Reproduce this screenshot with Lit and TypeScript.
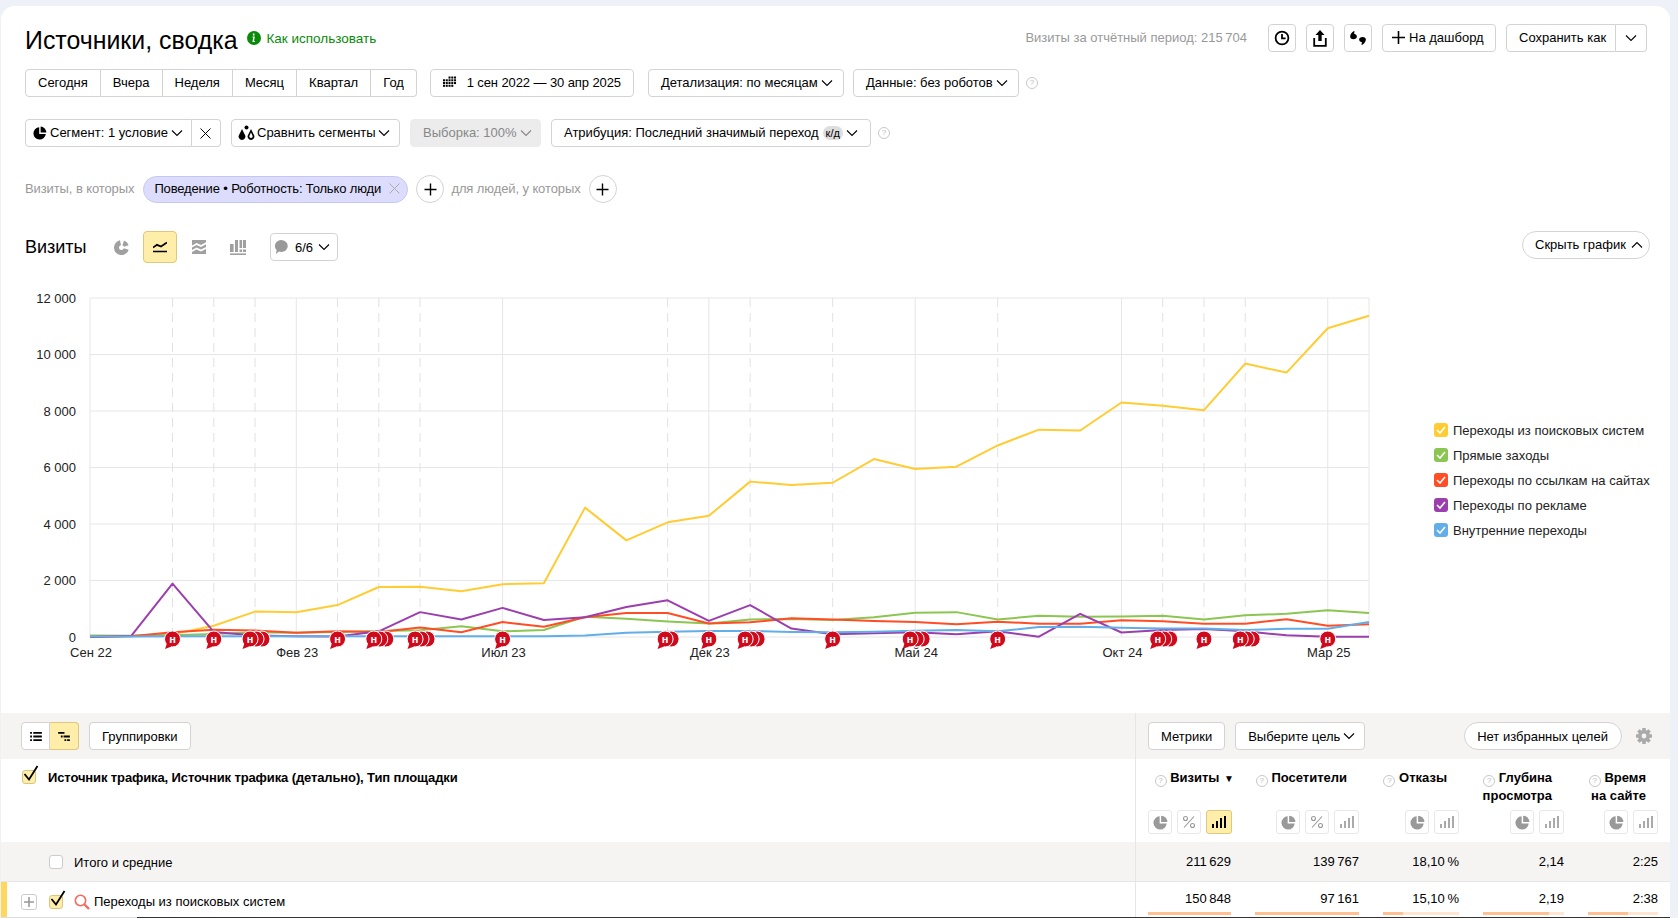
import { LitElement, html, css, svg } from "lit";
import { customElement } from "lit/decorators.js";

const chev = html`<svg class="chev" width="12" height="8" viewBox="0 0 12 8"><path d="M1 1.5 6 6.5 11 1.5" fill="none" stroke="currentColor" stroke-width="1.1"/></svg>`;
const chevUp = html`<svg class="chev" width="12" height="8" viewBox="0 0 12 8"><path d="M1 6.5 6 1.5 11 6.5" fill="none" stroke="currentColor" stroke-width="1.1"/></svg>`;
const pie = (c: string, s = 14) => html`<svg width=${s} height=${s} viewBox="0 0 14 14"><path d="M6.2 1.2A6.2 6.2 0 1 0 12.8 8H6.2Z" fill=${c}/><path d="M7.6 0.6A6 6 0 0 1 13.4 6.5H7.6Z" fill=${c}/></svg>`;
const percent = html`<svg width="14" height="14" viewBox="0 0 14 14" fill="none" stroke="#999" stroke-width="1.1"><circle cx="3.5" cy="3.5" r="2"/><circle cx="10.5" cy="10.5" r="2"/><path d="M12 1.5 2 12.5"/></svg>`;
const bars = (c: string) => html`<svg width="14" height="12" viewBox="0 0 14 12" fill=${c}><rect x="0" y="8" width="2" height="4"/><rect x="4" y="5" width="2" height="7"/><rect x="8" y="2" width="2" height="10"/><rect x="12" y="0" width="2" height="12"/></svg>`;
const plus = html`<svg width="13" height="13" viewBox="0 0 13 13"><path d="M6.5 0.5v12M0.5 6.5h12" stroke="#000" stroke-width="1.4"/></svg>`;
const cross = (c: string) => html`<svg width="11" height="11" viewBox="0 0 11 11"><path d="M0.5 0.5l10 10M10.5 0.5l-10 10" stroke=${c} stroke-width="1"/></svg>`;
const help = html`<span class="help">?</span>`;
const checkmark = html`<svg class="tick" width="16" height="17" viewBox="0 0 16 17"><path d="M1.5 9 6 14.5 14.5 1" fill="none" stroke="#000" stroke-width="1.8"/></svg>`;

const XS = (i: number) => 90 + (1279 / 31) * i;
const YS = (v: number) => 637 - (v / 2000) * 56.5;

const series: [string, number[]][] = [
  ["#ffcc33", [20, 40, 100, 400, 900, 880, 1130, 1770, 1780, 1620, 1870, 1900, 4580, 3420, 4060, 4290, 5500, 5380, 5460, 6300, 5950, 6030, 6780, 7340, 7310, 8300, 8190, 8030, 9680, 9360, 10930, 11370]],
  ["#8bc652", [50, 40, 60, 110, 170, 150, 180, 210, 240, 380, 200, 250, 720, 650, 550, 480, 620, 640, 600, 700, 860, 880, 620, 750, 720, 730, 750, 620, 770, 820, 950, 850]],
  ["#ff4d26", [0, 30, 170, 260, 230, 150, 200, 180, 340, 170, 530, 360, 700, 850, 850, 480, 520, 660, 620, 570, 530, 450, 540, 470, 470, 590, 560, 470, 470, 630, 400, 450]],
  ["#9c3fae", [0, 40, 1890, 180, 50, 30, 20, 200, 880, 620, 1030, 600, 700, 1060, 1300, 570, 1130, 300, 100, 130, 170, 100, 200, 10, 820, 160, 250, 280, 200, 60, 10, 10]],
  ["#62aee8", [20, 20, 25, 30, 30, 30, 30, 30, 30, 30, 30, 30, 50, 150, 190, 210, 210, 180, 170, 190, 220, 250, 200, 350, 360, 330, 300, 300, 250, 290, 290, 530]],
];
const dashed = [2, 3, 4, 6, 7, 8, 14, 16, 18, 22, 26, 27, 28];
const solid = [0, 5, 10, 15, 20, 25, 30];
const xLabels = ["Сен 22", "Фев 23", "Июл 23", "Дек 23", "Май 24", "Окт 24", "Мар 25"];
const stacks: [number, number][] = [[2, 1], [3, 1], [4, 3], [6, 1], [7, 3], [8, 3], [10, 1], [14, 2], [15, 1], [16, 3], [18, 1], [20, 3], [22, 1], [26, 3], [27, 1], [28, 3], [30, 1]];

const marker = (x: number, main: boolean) => svg`<g transform="translate(${x},639)">
  <circle r="8" fill="#cf0a1d" stroke="#fff" stroke-width="1"/>
  ${main ? svg`<path d="M-5.5 4-7.5 10-1 7.4Z" fill="#cf0a1d"/><text class="mk" y="3.5">н</text>` : ""}
</g>`;

const legend: [string, string][] = [
  ["#ffcc33", "Переходы из поисковых систем"],
  ["#8bc652", "Прямые заходы"],
  ["#ff4d26", "Переходы по ссылкам на сайтах"],
  ["#9c3fae", "Переходы по рекламе"],
  ["#62aee8", "Внутренние переходы"],
];

interface Metric { t: any; cls?: string; btns: ("pie" | "pct" | "bar" | "barOn")[]; }
const metrics: Metric[] = [
  { t: html`${help} Визиты <span class="sort">▼</span>`, cls: "sorted", btns: ["pie", "pct", "barOn"] },
  { t: html`${help} Посетители`, btns: ["pie", "pct", "bar"] },
  { t: html`${help} Отказы`, btns: ["pie", "bar"] },
  { t: html`${help} Глубина<br />просмотра`, btns: ["pie", "bar"] },
  { t: html`${help} Время<br />на сайте`, btns: ["pie", "bar"] },
];
const totals = ["211\u2009629", "139\u2009767", "18,10\u2009%", "2,14", "2:25"];
const row1 = ["150\u2009848", "97\u2009161", "15,10\u2009%", "2,19", "2:38"];
const fills = [100, 100, 26, 82, 57];

@customElement("app-root")
export class AppRoot extends LitElement {
  static styles = css`
    :host { display: block; width: 1678px; height: 918px; overflow: hidden; background: #eef1f7; font: 13px "Liberation Sans", Arial, sans-serif; color: #000; }
    * { box-sizing: border-box; }
    .card { margin: 6px 8px 0 1px; height: 912px; background: #fff; border-radius: 14px 14px 0 0; display: flex; flex-direction: column; overflow: hidden; }
    .row { display: flex; align-items: center; padding-left: 24px; height: 28px; flex: none; }
    .r0 { margin-top: 18px; }
    .r1 { margin-top: 17px; }
    .r2 { margin-top: 22px; }
    .r3 { margin-top: 28px; }
    .r4 { margin-top: 28px; height: 32px; }
    h1 { font-size: 24.9px; font-weight: 400; margin: 0; line-height: 28px; padding-top: 3px; }
    .how { display: flex; align-items: center; gap: 5px; margin-left: 10px; color: #0a8a0a; font-size: 13.5px; }
    .spacer { flex: 1; }
    .muted { color: #999; padding-bottom: 2px; }
    .btn { height: 28px; border: 1px solid #d3d3d3; border-radius: 4px; background: #fff; display: inline-flex; align-items: center; padding: 0 12px 1px; gap: 3px; white-space: nowrap; flex: none; }
    .chev { flex: none; }
    .group { display: flex; flex: none; }
    .group .btn { border-radius: 0; border-left-width: 0; }
    .group .btn:first-child { border-left-width: 1px; border-radius: 4px 0 0 4px; }
    .group .btn:last-child { border-radius: 0 4px 4px 0; }
    .ico { width: 28px; padding: 0; justify-content: center; }
    .help { width: 12px; height: 12px; border: 1px solid #c8c8c8; border-radius: 50%; color: #bbb; font-size: 8px; line-height: 10px; font-weight: 400; text-align: center; display: inline-block; vertical-align: -1px; }
    .off { background: #ececec; border-color: #ececec; color: #888; }
    .kd { background: #ddd; border-radius: 8px; font-size: 11px; padding: 1px 3px; margin-left: 1px; }
    .chip { height: 27px; width: 265px; padding: 0 7px 1px 10px; display: inline-flex; align-items: center; justify-content: space-between; background: #dcddfc; border: 1px solid #c6c7f0; border-radius: 14px; white-space: nowrap; letter-spacing: -0.15px; flex: none; }
    .round { width: 28px; height: 28px; border: 1px solid #d3d3d3; border-radius: 50%; display: inline-flex; align-items: center; justify-content: center; flex: none; }
    .tight { letter-spacing: -0.1px; }
    .vis { font-size: 18px; width: 74px; }
    .slot { width: 36px; height: 32px; display: inline-flex; align-items: center; justify-content: center; flex: none; }
    .slot.on { width: 34px; background: #ffeeaa; border: 1px solid #dcc87e; border-radius: 4px; }
    .pill { border-radius: 14px; }
    .chartwrap { height: 450px; display: flex; flex: none; }
    .chartwrap svg.chart { display: block; flex: none; }
    .ax { font: 13px "Liberation Sans", Arial, sans-serif; fill: #222; }
    .mk { font: bold 11px "Liberation Sans", Arial, sans-serif; fill: #fff; text-anchor: middle; }
    .legend { display: flex; flex-direction: column; gap: 7px; padding-top: 158px; margin-left: 1px; }
    .li { display: flex; align-items: center; height: 18px; gap: 5px; white-space: nowrap; color: #222; }
    .lbox { width: 14px; height: 14px; border-radius: 3px; display: inline-flex; align-items: center; justify-content: center; flex: none; }
    .tbar { display: grid; grid-template-columns: 1134px 1fr; height: 46px; background: #f5f4f2; flex: none; }
    .tbar .btn { padding-bottom: 0; }
    .tl { display: flex; align-items: center; padding-left: 20px; gap: 10px; }
    .tr { display: flex; align-items: center; padding-left: 12px; gap: 10px; border-left: 1px solid #e6e6e6; }
    .seg { width: 29px; padding: 0; justify-content: center; }
    .seg.on { background: #ffeeaa; border-color: #dcc87e; }
    .grid { display: grid; grid-template-columns: 1134px 108px 128px 100px 105px 94px; flex: none; }
    .hd { height: 83px; }
    .hl { padding: 11px 0 0 21px; display: flex; align-items: flex-start; gap: 12px; font-weight: 700; font-size: 13px; letter-spacing: -0.12px; line-height: 15px; }
    .check { width: 14px; height: 14px; border: 1px solid #d8c680; background: #ffeeaa; border-radius: 3px; position: relative; flex: none; display: inline-block; }
    .check.blank { background: #fff; border-color: #ccc; }
    .tick { position: absolute; left: 0; top: -6px; }
    .first { border-left: 1px solid #e6e6e6; }
    .hc { padding: 10px 24px 8px 0; display: flex; flex-direction: column; align-items: flex-end; }
    .hc.sorted { padding-right: 9px; }
    .ht { font-weight: 700; font-size: 13px; line-height: 17px; text-align: right; height: 34px; white-space: nowrap; }
    .sort { font-size: 10px; margin-left: 1px; }
    .mb { margin-top: auto; display: flex; gap: 5px; align-self: flex-end; margin-right: -12px; }
    .hc.sorted .mb { margin-right: 2px; }
    .m { width: 24px; height: 24px; border: 1px solid #e8e8e8; border-radius: 3px; display: inline-flex; align-items: center; justify-content: center; background: #fff; }
    .m.wide { width: 25px; }
    .m.on { width: 26px; background: #ffeeaa; border-color: #dcc87e; }
    .tot { height: 40px; background: #f5f4f2; border-bottom: 1px solid #e6e6e6; }
    .tot > div { display: flex; align-items: center; }
    .totl { padding-left: 48px; gap: 11px; }
    .totl span:last-child { padding-top: 1px; }
    .num { justify-content: flex-end; padding-right: 12px; }
    .dat { height: 35px; }
    .datl { display: flex; align-items: center; height: 35px; border-left: 6px solid #ffd75f; padding: 4px 0 0 14px; }
    .expand { width: 16px; height: 16px; border: 1px solid #ccc; border-radius: 3px; display: inline-flex; align-items: center; justify-content: center; margin-right: 12px; }
    .lens { margin: 0 4px 0 11px; flex: none; }
    .dc { padding: 9px 12px 0; text-align: right; height: 35px; display: flex; flex-direction: column; }
    .bar { height: 3px; background: #ffe6d2; margin-top: auto; margin-bottom: 2px; }
    .bar i { display: block; height: 3px; background: #ffc191; }
    .edge { display: flex; height: 1px; flex: none; background: #333; }
    .edge i { display: block; width: 136px; background: #ddd; }
  `;

  private metricBtn(k: string) {
    if (k === "pie") return html`<span class="m">${pie("#999", 15)}</span>`;
    if (k === "pct") return html`<span class="m">${percent}</span>`;
    if (k === "bar") return html`<span class="m wide">${bars("#aaa")}</span>`;
    return html`<span class="m on">${bars("#000")}</span>`;
  }

  render() {
    return html`<div class="card">
      <div class="row r0">
        <h1>Источники, сводка</h1>
        <span class="how">
          <svg width="14" height="14" viewBox="0 0 14 14"><circle cx="7" cy="7" r="7" fill="#0a8a0a"/><path d="M7.5 2.5v2h-1.6v-2ZM7.8 5.6 7 10h1v1H5.4l.8-4.4H5.5v-1Z" fill="#fff"/></svg>
          Как использовать
        </span>
        <span class="spacer"></span>
        <span class="muted">Визиты за отчётный период: 215\u2009704</span>
        <span class="btn ico" style="margin-left:21px">
          <svg width="16" height="16" viewBox="0 0 16 16" fill="none" stroke="#000" stroke-width="1.8"><circle cx="8" cy="8" r="6.4"/><path d="M8 4v4.4h3.6"/></svg>
        </span>
        <span class="btn ico" style="margin-left:10px">
          <svg width="14" height="17" viewBox="0 0 14 17"><path d="M7 0 11.5 5H8.7v6H5.3V5H2.5Z"/><path d="M1.2 8v7.8h11.6V8" fill="none" stroke="#000" stroke-width="1.8"/></svg>
        </span>
        <span class="btn ico" style="margin-left:10px">
          <svg width="18" height="16" viewBox="0 0 16 14"><path d="M4 1 5 1 4.5 3.2C6.3 3.5 7 4.5 7 5.8 7 7.2 5.8 8 4 8 2 8 1 7 1 5.6 1 3.8 2.5 2 4 1Z"/><path d="M12 13 11 13 11.5 10.8C9.7 10.5 9 9.5 9 8.2 9 6.8 10.2 6 12 6 14 6 15 7 15 8.4 15 10.2 13.5 12 12 13Z"/></svg>
        </span>
        <span class="btn" style="margin-left:10px;gap:4px;padding:0 9px 1px;width:114px">
          <svg width="13" height="13" viewBox="0 0 13 13"><path d="M6.5 0v13M0 6.5h13" stroke="#000" stroke-width="1.6"/></svg>На дашборд
        </span>
        <span class="group" style="margin:0 23px 0 10px">
          <span class="btn" style="width:110px">Сохранить как</span>
          <span class="btn" style="padding:0 9px">${chev}</span>
        </span>
      </div>

      <div class="row r1">
        <span class="group">
          ${["Сегодня", "Вчера", "Неделя", "Месяц", "Квартал", "Год"].map((t) => html`<span class="btn">${t}</span>`)}
        </span>
        <span class="btn" style="margin-left:13px;gap:10px;width:204px">
          <svg width="15" height="13" viewBox="0 0 15 13" fill="#000">
            ${[0, 3, 6, 9].map((y) => [0, 3, 6, 9, 12].map((x) => (y === 0 && x < 6) || (y === 9 && x > 9) ? "" : svg`<rect x=${x} y=${y} width="2.2" height="2.2"/>`))}
          </svg>
          <span class="tight">1 сен 2022 — 30 апр 2025</span>
        </span>
        <span class="btn" style="margin-left:14px;width:196px">Детализация: по месяцам ${chev}</span>
        <span class="btn" style="margin-left:9px;width:166px">Данные: без роботов ${chev}</span>
        <span style="margin-left:7px;display:flex">${help}</span>
      </div>

      <div class="row r2">
        <span class="group">
          <span class="btn" style="padding:0 6px 1px 7px;gap:3px;width:167px">${pie("#000")} Сегмент: 1 условие ${chev}</span>
          <span class="btn" style="padding:0 8px;width:29px">${cross("#000")}</span>
        </span>
        <span class="btn" style="margin-left:10px;padding:0 6px 1px 6px;gap:2px;width:169px">
          <svg width="17" height="15" viewBox="0 0 17 15"><path d="M4 4 7 10a3.4 3.4 0 1 1-6 0Z"/><path d="M13 4 16 10a3.4 3.4 0 1 1-6 0ZM13 7.5 11.6 10.6a1.6 1.6 0 1 0 2.8 0Z" fill-rule="evenodd"/><circle cx="8.5" cy="2.5" r="2"/></svg>
          Сравнить сегменты ${chev}
        </span>
        <span class="btn off" style="margin-left:10px;width:131px">Выборка: 100% ${chev}</span>
        <span class="btn" style="margin-left:10px;width:320px">Атрибуция: Последний значимый переход <span class="kd">к/д</span> ${chev}</span>
        <span style="margin-left:7px;display:flex">${help}</span>
      </div>

      <div class="row r3">
        <span class="muted tight">Визиты, в которых</span>
        <span class="chip" style="margin-left:9px">Поведение • Роботность: Только люди ${cross("#aaa")}</span>
        <span class="round" style="margin-left:8px">${plus}</span>
        <span class="muted tight" style="margin-left:7px">для людей, у которых</span>
        <span class="round" style="margin-left:8px">${plus}</span>
      </div>

      <div class="row r4">
        <span class="vis">Визиты</span>
        <span class="slot" style="width:44px">
          <svg width="15" height="15" viewBox="0 0 15 15" fill="none" stroke="#a0a0a0" stroke-width="5"><path d="M6.5 2.7A5 5 0 1 0 12.3 9"/><path d="M9.2 2.9A5 5 0 0 1 12.3 6"/></svg>
        </span>
        <span class="slot on">
          <svg width="14" height="12" viewBox="0 0 14 12" fill="none" stroke="#000"><path d="M0 6.5 4 3.8 8 5.5 14 1.5" stroke-width="1.8"/><path d="M0 10.5h14" stroke-width="1.4"/></svg>
        </span>
        <span class="slot" style="width:44px">
          <svg width="14" height="14" viewBox="0 0 14 14" fill="#a0a0a0"><path d="M0 0h14v2.2L9 5 4.5 3 0 5.5ZM0 7.5 4.5 5l4.5 2 5-2.8V7L9 9.6 4.5 7.6 0 10ZM0 12 4.5 9.6 9 11.6 14 9v5H0Z"/></svg>
        </span>
        <span class="slot" style="width:34px">
          <svg width="16" height="15" viewBox="0 0 16 15" fill="#a0a0a0"><rect x="0" y="4" width="3.6" height="8"/><rect x="5" y="0" width="3" height="12"/><rect x="9.5" y="0" width="2.6" height="8"/><rect x="9.5" y="9.5" width="2.6" height="2.5"/><rect x="13" y="0" width="3" height="8"/><rect x="13" y="9.5" width="3" height="2.5"/><rect x="0" y="13.4" width="16" height="1.6"/></svg>
        </span>
        <span class="btn" style="margin-left:15px;padding:0 3px 0 3px;gap:5px;width:68px">
          <svg width="15" height="16" viewBox="0 0 15 16"><path d="M7.5 1a6.5 6 0 1 1-2.6 11.6L2 15l.6-4A6.5 6 0 0 1 7.5 1Z" fill="#999"/></svg>
          <span style="margin-left:1px">6/6</span>${chev}
        </span>
        <span class="spacer"></span>
        <span class="btn pill" style="margin:0 20px 4px 0;padding:0 6px 1px 12px;width:128px;justify-content:space-between">Скрыть график ${chevUp}</span>
      </div>

      <div class="chartwrap">
        <svg class="chart" width="1432" height="450" viewBox="1 263 1432 450">
          ${[0, 2000, 4000, 6000, 8000, 10000, 12000].map((v) => svg`
            <line x1="90" x2="1369" y1=${YS(v)} y2=${YS(v)} stroke="#e6e6e6"/>
            <text class="ax" x="76" y=${YS(v) + 4.5} text-anchor="end">${v === 0 ? "0" : `${v / 1000} 000`}</text>`)}
          ${dashed.map((i) => svg`<line x1=${XS(i)} x2=${XS(i)} y1="298" y2="637" stroke="#e2e2e2" stroke-dasharray="9 6"/>`)}
          ${solid.map((i) => svg`<line x1=${XS(i)} x2=${XS(i)} y1="298" y2="637" stroke="#e6e6e6"/>`)}
          <line x1="1369" x2="1369" y1="298" y2="637" stroke="#e6e6e6"/>
          ${series.map(([c, d]) => svg`<polyline fill="none" stroke=${c} stroke-width="2" stroke-linejoin="round" points=${d.map((v, i) => `${XS(i)},${YS(v)}`).join(" ")}/>`)}
          ${stacks.map(([i, n]) => {
            const x0 = XS(i) - 2.5 * (n - 1);
            const items = [];
            for (let k = n - 1; k >= 0; k--) items.push(marker(x0 + k * 6, k === 0));
            return items;
          })}
          ${xLabels.map((t, k) => svg`<text class="ax" x=${XS(k * 5) + 1} y="657" text-anchor="middle">${t}</text>`)}
        </svg>
        <div class="legend">
          ${legend.map(([c, t]) => html`<div class="li"><span class="lbox" style="background:${c}">
            <svg width="10" height="8" viewBox="0 0 10 8"><path d="M1 4 4 7 9 1" fill="none" stroke="#fff" stroke-width="1.6"/></svg></span>${t}</div>`)}
        </div>
      </div>

      <div class="tbar">
        <div class="tl">
          <span class="group">
            <span class="btn seg"><svg width="12" height="9" viewBox="0 0 13 10"><path d="M0 0h2v2H0ZM3.5 0H13v2H3.5ZM0 4h2v2H0ZM3.5 4H13v2H3.5ZM0 8h2v2H0ZM3.5 8H13v2H3.5Z"/></svg></span>
            <span class="btn seg on"><svg width="12" height="9" viewBox="0 0 13 10"><path d="M0 0h7v2H0ZM3 4h2v2H3ZM6 4h7v2H6ZM7 8h2v2H7ZM10 8h3v2h-3Z"/></svg></span>
          </span>
          <span class="btn">Группировки</span>
        </div>
        <div class="tr">
          <span class="btn">Метрики</span>
          <span class="btn" style="width:130px">Выберите цель ${chev}</span>
          <span class="btn pill" style="margin-left:89px;width:158px">Нет избранных целей</span>
          <svg style="margin-left:4px" width="16" height="16" viewBox="0 0 16 16"><g fill="#aaa">${[0, 45, 90, 135].map((a) => svg`<rect x="6.2" y="0" width="3.6" height="16" rx="0.6" transform="rotate(${a} 8 8)"/>`)}<circle cx="8" cy="8" r="6"/></g><circle cx="8" cy="8" r="2.4" fill="#f5f4f2"/></svg>
        </div>
      </div>

      <div class="grid hd">
        <div class="hl"><span class="check">${checkmark}</span><span>Источник трафика, Источник трафика (детально), Тип площадки</span></div>
        ${metrics.map((m, i) => html`<div class="hc ${m.cls ?? ""} ${i === 0 ? "first" : ""}">
          <div class="ht">${m.t}</div>
          <div class="mb">${m.btns.map((b) => this.metricBtn(b))}</div>
        </div>`)}
      </div>

      <div class="grid tot">
        <div class="totl"><span class="check blank"></span><span>Итого и средние</span></div>
        ${totals.map((v, i) => html`<div class="num ${i === 0 ? "first" : ""}">${v}</div>`)}
      </div>

      <div class="grid dat">
        <div class="datl">
          <span class="expand"><svg width="10" height="10" viewBox="0 0 10 10"><path d="M5 0v10M0 5h10" stroke="#999" stroke-width="1.6"/></svg></span>
          <span class="check">${checkmark}</span>
          <svg class="lens" width="16" height="16" viewBox="0 0 16 16" fill="none" stroke="#f56a5f"><circle cx="6.5" cy="6.5" r="5.2" stroke-width="1.6"/><path d="M10.5 10.5 15 15" stroke-width="2.4"/></svg>
          <span>Переходы из поисковых систем</span>
        </div>
        ${row1.map((v, i) => html`<div class="dc ${i === 0 ? "first" : ""}"><span>${v}</span><div class="bar"><i style="width:${fills[i]}%"></i></div></div>`)}
      </div>
      <div class="edge"><i></i></div>
    </div>`;
  }
}
